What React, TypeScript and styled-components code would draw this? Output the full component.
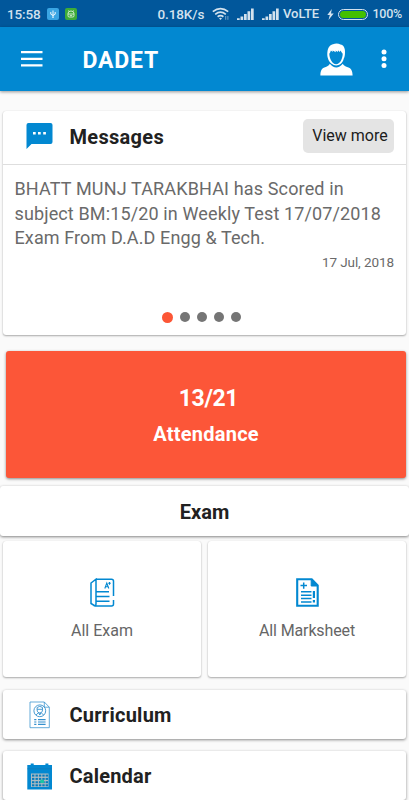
import React from "react";
import styled, { createGlobalStyle } from "styled-components";

const BLUE = "#0288d1";

const GlobalStyle = createGlobalStyle`
  * { box-sizing: border-box; }
  html, body { margin: 0; padding: 0; background: #fafafa; }
  body { font-family: Roboto, "Liberation Sans", sans-serif; overflow: hidden; }
  svg { display: block; flex: none; }
`;

const Screen = styled.div`
  width: 409px;
  height: 800px;
  overflow: hidden;
  background: #fafafa;
  display: flex;
  flex-direction: column;
`;

const StatusBar = styled.header`
  height: 27px;
  flex: none;
  background: #01579b;
  display: flex;
  align-items: center;
  padding: 1px 8px 0 7px;
  color: #d3e2ee;
`;

const StatusText = styled.span<{ $width: number; $size?: number; $spacing?: number }>`
  width: ${(p) => p.$width}px;
  flex: none;
  white-space: nowrap;
  font-size: ${(p) => p.$size ?? 13}px;
  font-weight: 500;
  line-height: 26px;
  letter-spacing: ${(p) => p.$spacing ?? 0}px;
`;

const StatusBadge = styled.span<{ $color: string }>`
  width: 12px;
  height: 12px;
  margin-right: 6px;
  border-radius: 2px;
  background: ${(p) => p.$color};
`;

const Spacer = styled.span`
  flex: 1;
`;

const SignalSlot = styled.span<{ $gap: number }>`
  margin-right: ${(p) => p.$gap}px;
`;

const Battery = styled.span`
  width: 30px;
  height: 11px;
  margin: 0 5px 0 3.5px;
  border: 1px solid #d3e2ee;
  border-radius: 6px;
  padding: 1px;
  &::before {
    content: "";
    display: block;
    height: 7px;
    border-radius: 4px;
    background: #43c000;
  }
`;

const AppBar = styled.nav`
  height: 64px;
  flex: none;
  background: ${BLUE};
  box-shadow: 0 1px 3px rgba(0, 0, 0, 0.4);
  display: flex;
  align-items: center;
  padding: 0 22px 0 21px;
  color: #fff;
`;

const AppTitle = styled.h1`
  margin: 2px 0 0 39.5px;
  flex: 1;
  font-size: 23px;
  font-weight: 700;
  letter-spacing: 0.8px;
`;

const AppActions = styled.div`
  display: flex;
  align-items: center;
  gap: 28px;
`;

const Card = styled.section`
  background: #fff;
  border-radius: 3px;
  box-shadow: 0 1px 2px rgba(0, 0, 0, 0.32), 0 0 1px rgba(0, 0, 0, 0.12);
`;

const MessagesCard = styled(Card)`
  height: 224px;
  flex: none;
  margin: 20px 3px 0;
  display: flex;
  flex-direction: column;
`;

const MessagesHeader = styled.div`
  height: 54px;
  flex: none;
  border-bottom: 1px solid #dedede;
  display: flex;
  align-items: center;
  padding: 0 12px 3px 22.5px;
`;

const SectionTitle = styled.h2<{ $spacing?: number }>`
  margin: 0;
  font-size: 20px;
  line-height: 26px;
  font-weight: 700;
  letter-spacing: ${(p) => p.$spacing ?? 0}px;
  color: #212121;
`;

const HeaderTitle = styled(SectionTitle)`
  flex: 1;
  margin: 2px 0 0 17px;
`;

const ViewMore = styled.button`
  width: 91px;
  height: 34px;
  padding: 0 0 2px 3px;
  border: 0;
  border-radius: 5px;
  background: #e4e4e4;
  color: #1c1c1c;
  font: 400 16px Roboto, sans-serif;
  white-space: nowrap;
`;

const MessageText = styled.p`
  margin: 12px 0 0 11.5px;
  color: #6a6a6a;
  font-size: 18px;
  line-height: 24.5px;
  white-space: nowrap;
`;

const MessageLine = styled.span<{ $spacing: number }>`
  display: block;
  letter-spacing: ${(p) => p.$spacing}px;
`;

const MessageDate = styled.time`
  align-self: flex-end;
  margin: 2.5px 12px 0 0;
  color: #6a6a6a;
  font-size: 13.5px;
  line-height: 18px;
  letter-spacing: -0.08px;
`;

const Pager = styled.div`
  margin: auto 0 12px 156px;
  display: flex;
  align-items: center;
  height: 12px;
`;

const PagerSlot = styled.span`
  width: 17px;
  flex: none;
  display: flex;
  justify-content: center;
`;

const Dot = styled.span<{ $active?: boolean }>`
  width: ${(p) => (p.$active ? 11 : 10)}px;
  height: ${(p) => (p.$active ? 11 : 10)}px;
  border-radius: 50%;
  background: ${(p) => (p.$active ? "#fc5636" : "#757575")};
`;

const AttendanceCard = styled(Card)`
  height: 127px;
  flex: none;
  margin: 16px 3px 0 6px;
  padding-top: 34px;
  background: #fc5638;
  color: #fff;
  text-align: center;
  font-weight: 700;
  box-shadow: 0 1px 3px rgba(0, 0, 0, 0.45);
`;

const Ratio = styled.div`
  font-size: 23px;
  line-height: 28px;
  letter-spacing: -0.4px;
  padding-left: 5px;
`;

const AttendanceLabel = styled.div`
  font-size: 20px;
  line-height: 26px;
  margin-top: 8px;
  letter-spacing: 0.25px;
`;

const ExamHeader = styled(Card)`
  height: 50px;
  flex: none;
  margin-top: 8px;
  display: flex;
  align-items: center;
  justify-content: center;
  padding-top: 2px;
  box-shadow: 0 1px 3px rgba(0, 0, 0, 0.48);
`;

const ExamGrid = styled.div`
  display: grid;
  grid-template-columns: 198px 198px;
  gap: 7px;
  height: 136px;
  flex: none;
  margin: 5px 3px 0;
`;

const Tile = styled(Card)`
  display: flex;
  flex-direction: column;
  align-items: center;
  padding-top: 37px;
`;

const TileLabel = styled.span<{ $spacing: number }>`
  margin-top: 13px;
  color: #666;
  font-size: 16px;
  line-height: 20px;
  letter-spacing: ${(p) => p.$spacing}px;
`;

const MenuRow = styled(Card)<{ $gap: number }>`
  height: 49px;
  flex: none;
  margin: ${(p) => p.$gap}px 3px 0;
  padding: 1px 0 0 22.5px;
  display: flex;
  align-items: center;
  gap: 17px;
  box-shadow: 0 1px 3px rgba(0, 0, 0, 0.45);
`;

const UsbIcon = () => (
  <svg width="12" height="12" viewBox="0 0 12 12" fill="none" stroke="#fff" strokeWidth=".9">
    <path d="M6 2.500V9.500M3.800 4v2.200L6 7.500 8.200 6.200V4" />
    <circle cx="6" cy="9.300" r=".6" fill="#fff" stroke="none" />
  </svg>
);

const RobotIcon = () => (
  <svg width="12" height="12" viewBox="0 0 12 12" fill="none" stroke="#dff3dc" strokeWidth=".9">
    <path d="M3 5.500a3 2.500 0 0 1 6 0v2.300a1.200 1.200 0 0 1-1.200 1.200H4.200A1.200 1.200 0 0 1 3 7.800zM3 6h6M3.500 2.500l.8 1M8.500 2.500l-.8 1M4.800 7.600h2.400" />
  </svg>
);

const WifiIcon = () => (
  <svg width="18" height="14" viewBox="0 0 18 14" fill="none" stroke="#d3e2ee">
    <path d="M.8 4.700Q8.500-1.600 16.200 4.700" strokeWidth="1.700" />
    <path d="M3.200 7.300Q8.500 3 13.800 7.300" strokeWidth="1.700" />
    <path d="M5.600 9.700Q8.500 7.500 11.400 9.700" strokeWidth="1.700" />
    <path d="M7 11.300Q8.500 10.300 10 11.300L8.500 13z" fill="#d3e2ee" stroke="none" />
    <path d="M13.700 9v3.800M15.900 9v3.800" strokeWidth=".9" strokeOpacity=".6" />
  </svg>
);

const SignalIcon = () => (
  <svg width="17" height="12" viewBox="0 0 17 12" fill="#d3e2ee">
    <path d="M0 10.300h2.700V12H0zM3.500 8.500h2.700V12H3.500zM7 6h2.700v6H7zM10.500 3.300h2.700V12h-2.700zM14 .5h2.700V12H14z" />
  </svg>
);

const BoltIcon = () => (
  <svg width="7" height="11" viewBox="0 0 7 11" fill="#d3e2ee">
    <path d="M4.800 0 .3 6h2.500L1.500 11 6.700 4.400H4z" />
  </svg>
);

const MenuIcon = () => (
  <svg width="22" height="16" viewBox="0 0 22 16" fill="#fff">
    <path d="M0 0h21.500v2.200H0zM0 6.700h21.500v2.200H0zM0 13.200h21.500v2.200H0z" />
  </svg>
);

const PersonIcon = () => (
  <svg width="33" height="33" viewBox="0 0 33 33">
    <path d="M8 15.500C6.700 12 7.300 6.500 9 4 10.300 1.800 12 1.600 13 1.300 15.500.3 18.500.4 20.500 1.600 23.500 2 25.300 5.500 25 9.300c0 2.700-.4 4.900-1.300 6.500-.8 4.100-4.300 6.700-7.500 6.700S9 19.500 8 15.500z" fill="#fff" />
    <path d="M9.300 10.800c.8-1 1.200-2 1.600-3.300l1.900 1.500-.2-1.500 3.300 1.700-.4-1.600 2.300 1.400.2-1.700 1.700 1.800.8-1.500c.8 1 1.300 2.300 2.200 3.200-.1 5.200-2.700 10.400-6.600 10.400s-6.600-5.300-6.800-10.400z" fill={BLUE} />
    <path d="M9.800 20.800c3.800 4.800 9.200 4.800 13 0 1 2 2.500 2.600 4.300 3.100 3.900 1 5.500 3.700 5.500 8.600H.4c0-4.900 1.400-7.600 5.300-8.600 1.800-.5 3.200-1.100 4.100-3.100z" fill="#fff" />
  </svg>
);

const MoreIcon = () => (
  <svg width="6" height="20" viewBox="0 0 6 20" fill="#fff">
    <circle cx="3" cy="3" r="2.500" />
    <circle cx="3" cy="9.700" r="2.500" />
    <circle cx="3" cy="16.500" r="2.500" />
  </svg>
);

const ChatIcon = () => (
  <svg width="27" height="26" viewBox="0 0 27 26">
    <path d="M2.500 0h22A2 2 0 0 1 26.500 2v17A2 2 0 0 1 24.500 21H5.500L.5 26V2A2 2 0 0 1 2.500 0z" fill={BLUE} />
    <path d="M7 9h2.700v2.500H7zM12 9h2.700v2.500H12zM17.200 9h2.700v2.500h-2.700z" fill="#fff" />
  </svg>
);

const ExamIcon = () => (
  <svg width="25" height="30" viewBox="0 0 25 30" fill="none" stroke={BLUE} strokeWidth="1.500">
    <path d="M6 1.200h15.500A2 2 0 0 1 23.500 3.200V18M23.500 22v4a2 2 0 0 1-2 2H5L1 25.500V5L6 1.200V26q0 2-2.500 1.500M6 13.700h13M6 18.500h13.500M6 23.200h13.500" />
    <path d="m14.800 10.500 2-5.500 2 5.500m-3.300-1.800h2.600M19.500 4v2.700M18.200 5.300h2.600" strokeWidth="1.100" />
  </svg>
);

const MarksheetIcon = () => (
  <svg width="23" height="30" viewBox="0 0 23 30" fill="none" stroke={BLUE}>
    <path d="M1.200 1.200h14.500l6 6.200V27.800H1.200z" strokeWidth="2.100" />
    <path d="M15.200 1v7h6.500z" fill={BLUE} strokeWidth="1" />
    <path d="M4.500 7.500h6.500M7.700 4.400v6.300M5 13.700h10.500M5 17.200h10.500M5 20.500h10.500M5 23.900h10.500" strokeWidth="1.500" />
    <path d="M17.900 13v7M17.900 22v2.600" strokeWidth="2.200" />
  </svg>
);

const CurriculumIcon = () => (
  <svg width="27" height="28" viewBox="0 0 27 28" fill="none" stroke="#3490cd" strokeWidth=".9">
    <path d="M4 1h14.300l5 5.200v20.500H4zM18.300 1v5.200h5" strokeOpacity=".85" />
    <circle cx="13.800" cy="9.800" r="5.900" />
    <path d="M11.100 8.800V6.500q2.700-2.300 5.400 0v2.300c0 4.300-5.400 4.300-5.400 0zm0-.5h5.400M10.100 14l2.500-2.500M17.500 14 15 11.500M12.600 11.500l1.200 2.500 1.200-2.500" />
    <path d="M8.200 18.700h2.200M8.200 21h2.200M8.200 23.300h2.200M12 18.700h7.600M12 21h7.600M12 23.300h7.600" strokeWidth="1.200" />
  </svg>
);

const CalendarIcon = () => (
  <svg width="27" height="27" viewBox="0 0 27 27">
    <path d="M1.300 2h3.400V.5h3V2h11.700V.5h3V2H26v24.500H1.300z" fill={BLUE} />
    <path d="M1.300 5.800H26" stroke="#1677af" strokeWidth=".6" />
    <path d="M5 10.500h17.500V24H5z" fill="#aebcc2" />
    <g fill="#087bbb">
      {[11.6, 14.9, 18.2, 21.3].map((y) =>
        [6, 9.5, 12.9, 16.3, 19.6].map((x) => (
          <rect key={`${x}-${y}`} x={x} y={y} width="2.400" height="2" />
        ))
      )}
    </g>
    <path d="M14.300 16.800h3.700v3.200h-3.700z" fill="#19c5a3" />
  </svg>
);

export default function App() {
  return (
    <Screen>
      <GlobalStyle />
      <StatusBar>
        <StatusText $width={39.5} $size={13.5} $spacing={-0.15}>15:58</StatusText>
        <StatusBadge $color="#3aa5e3"><UsbIcon /></StatusBadge>
        <StatusBadge $color="#3eac38"><RobotIcon /></StatusBadge>
        <Spacer />
        <StatusText $width={54} $size={13.5} $spacing={-0.1}>0.18K/s</StatusText>
        <SignalSlot $gap={7.5}><WifiIcon /></SignalSlot>
        <SignalSlot $gap={7.5}><SignalIcon /></SignalSlot>
        <SignalSlot $gap={4.5}><SignalIcon /></SignalSlot>
        <StatusText $width={44}>VoLTE</StatusText>
        <BoltIcon />
        <Battery />
        <StatusText $width={28.5} $size={12.5} $spacing={-0.25}>100%</StatusText>
      </StatusBar>
      <AppBar>
        <MenuIcon />
        <AppTitle>DADET</AppTitle>
        <AppActions>
          <PersonIcon />
          <MoreIcon />
        </AppActions>
      </AppBar>
      <MessagesCard>
        <MessagesHeader>
          <ChatIcon />
          <HeaderTitle $spacing={0.3}>Messages</HeaderTitle>
          <ViewMore>View more</ViewMore>
        </MessagesHeader>
        <MessageText>
          <MessageLine $spacing={0.15}>BHATT MUNJ TARAKBHAI has Scored in</MessageLine>
          <MessageLine $spacing={0.13}>subject BM:15/20 in Weekly Test 17/07/2018</MessageLine>
          <MessageLine $spacing={0.11}>Exam From D.A.D Engg &amp; Tech.</MessageLine>
        </MessageText>
        <MessageDate>17 Jul, 2018</MessageDate>
        <Pager>
          {[0, 1, 2, 3, 4].map((i) => (
            <PagerSlot key={i}><Dot $active={i === 0} /></PagerSlot>
          ))}
        </Pager>
      </MessagesCard>
      <AttendanceCard>
        <Ratio>13/21</Ratio>
        <AttendanceLabel>Attendance</AttendanceLabel>
      </AttendanceCard>
      <ExamHeader>
        <SectionTitle>Exam</SectionTitle>
      </ExamHeader>
      <ExamGrid>
        <Tile>
          <ExamIcon />
          <TileLabel $spacing={0}>All Exam</TileLabel>
        </Tile>
        <Tile>
          <MarksheetIcon />
          <TileLabel $spacing={-0.12}>All Marksheet</TileLabel>
        </Tile>
      </ExamGrid>
      <MenuRow $gap={13}>
        <CurriculumIcon />
        <SectionTitle $spacing={0.25}>Curriculum</SectionTitle>
      </MenuRow>
      <MenuRow $gap={12}>
        <CalendarIcon />
        <SectionTitle $spacing={0.2}>Calendar</SectionTitle>
      </MenuRow>
    </Screen>
  );
}
